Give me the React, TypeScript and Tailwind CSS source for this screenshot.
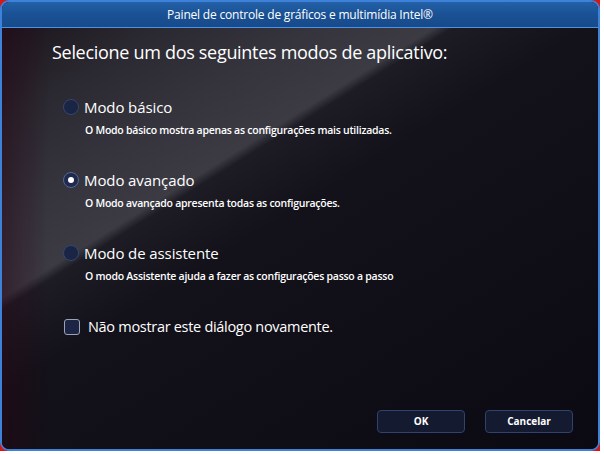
import React from "react";

type Mode = {
  id: string;
  label: string;
  description: string;
};

const modes: Mode[] = [
  {
    id: "basic",
    label: "Modo básico",
    description: "O Modo básico mostra apenas as configurações mais utilizadas.",
  },
  {
    id: "advanced",
    label: "Modo avançado",
    description: "O Modo avançado apresenta todas as configurações.",
  },
  {
    id: "wizard",
    label: "Modo de assistente",
    description: "O modo Assistente ajuda a fazer as configurações passo a passo",
  },
];

function Radio({ checked }: { checked: boolean }) {
  return (
    <span
      className={`flex h-[16px] w-[16px] shrink-0 items-center justify-center rounded-full border ${
        checked ? "border-[#52689a] bg-[#1f2a4c]" : "border-[#34476f] bg-[#1a2444]"
      }`}
    >
      {checked ? <span className="h-[6px] w-[6px] rounded-full bg-white" /> : null}
    </span>
  );
}

export default function App() {
  const selected = "advanced";

  return (
    <div className="h-[454px] w-[604px] bg-white">
      <div className="h-[451px] w-[600px] bg-[#d41818]">
        <div className="flex h-full w-full flex-col overflow-hidden rounded-[9px] border-2 border-[#3d82d8] bg-[#0b0a12] font-['Open_Sans',sans-serif] text-white">
          {/* title bar */}
          <div className="flex h-[26px] shrink-0 items-center justify-center border-b border-[#4c92e6] bg-[linear-gradient(180deg,#2461a8_0%,#1a5296_45%,#174a8a_100%)] text-[12px] tracking-[-0.2px] text-white">
            Painel de controle de gráficos e multimídia Intel®
          </div>

          {/* body */}
          <div className="relative flex flex-1 flex-col bg-[linear-gradient(148deg,#1c151d_0%,#2a2830_12%,#35343d_24%,#3c3b44_34%,#1d1c24_35.5%,#131119_46%,#0b0a12_100%)]">
            <div className="flex flex-1 flex-col bg-[linear-gradient(90deg,rgba(40,6,22,0.45)_0%,rgba(40,6,22,0)_8%)] pl-[50px] pt-[9px]">
              <h1 className="text-[18px] leading-[30px] tracking-[-0.3px]">
                Selecione um dos seguintes modos de aplicativo:
              </h1>

              <div className="mt-[30px] flex flex-col gap-[33px] pl-[11px]">
                {modes.map((m) => (
                  <div key={m.id} className="flex flex-col">
                    <div className="flex items-center gap-[5px]">
                      <Radio checked={m.id === selected} />
                      <span className="text-[15px] leading-[20px] tracking-[-0.1px]">{m.label}</span>
                    </div>
                    <div className="mt-[6px] pl-[22px] text-[10.5px] font-semibold leading-[14px] tracking-[-0.25px]">
                      {m.description}
                    </div>
                  </div>
                ))}
              </div>

              <label className="mt-[34px] flex items-center gap-[8px] pl-[12px]">
                <span className="h-[16px] w-[16px] shrink-0 rounded-[3px] border border-[#9aa2b4] bg-[#1c2544]" />
                <span className="text-[14.5px] leading-[20px] tracking-[-0.3px]">
                  Não mostrar este diálogo novamente.
                </span>
              </label>

              <div className="mt-auto flex justify-end gap-[20px] pb-[16px] pr-[25px]">
                <button className="h-[23px] w-[88px] rounded-[4px] border border-[#2f4270] bg-[#141a2f] text-[10px] font-bold text-white">
                  OK
                </button>
                <button className="h-[23px] w-[88px] rounded-[4px] border border-[#2f4270] bg-[#141a2f] text-[10px] font-bold text-white">
                  Cancelar
                </button>
              </div>
            </div>
          </div>
        </div>
      </div>
    </div>
  );
}
